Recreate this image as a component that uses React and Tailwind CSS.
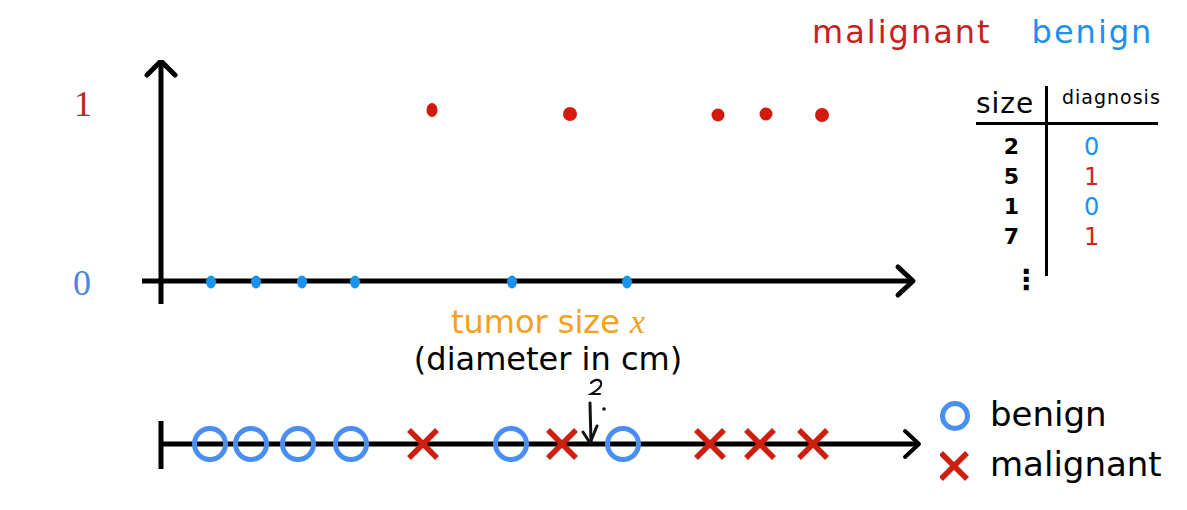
import React from 'react'

const SANS = { fontFamily: '"DejaVu Sans", Verdana, sans-serif' }
const SERIF = { fontFamily: '"Liberation Serif", "DejaVu Serif", serif' }
const HAND = { fontFamily: '"DejaVu Sans", sans-serif' }

const RED_DOTS = [
  { x: 432, y: 110, rx: 5.5, ry: 7 },
  { x: 570, y: 114, rx: 7, ry: 7 },
  { x: 718, y: 115, rx: 6.5, ry: 6.5 },
  { x: 766, y: 114, rx: 6.5, ry: 6.5 },
  { x: 822, y: 115, rx: 7, ry: 7 },
]
const BLUE_DOTS = [211, 256, 302, 355, 512, 627]

const CIRCLES = [210, 251, 298, 351, 511, 623]
const CROSSES = [423, 562, 710, 760, 813]

const ROWS = [
  { size: '2', dx: '0', tone: 'text-[#1e8ff0]' },
  { size: '5', dx: '1', tone: 'text-[#d0261a]' },
  { size: '1', dx: '0', tone: 'text-[#1e8ff0]' },
  { size: '7', dx: '1', tone: 'text-[#d0261a]' },
]

function Cross({ cx, cy, r = 14, w = 5.5 }) {
  return (
    <g stroke="#cc1f10" strokeWidth={w} strokeLinecap="butt">
      <line x1={cx - r} y1={cy - r} x2={cx + r} y2={cy + r} />
      <line x1={cx + r} y1={cy - r} x2={cx - r} y2={cy + r} />
    </g>
  )
}

function TopChart() {
  return (
    <div className="relative w-[940px] h-[325px]">
      <svg width="940" height="325" className="absolute inset-0">
        <g transform="translate(0,-60)">
          {/* y axis */}
          <line x1="161" y1="61" x2="161" y2="304" stroke="#000" strokeWidth="5" />
          <polyline points="147,75 161,61 175,75" fill="none" stroke="#000" strokeWidth="5" strokeLinecap="round" strokeLinejoin="round" />
          {/* x axis */}
          <line x1="142" y1="281" x2="912" y2="281" stroke="#000" strokeWidth="5" />
          <polyline points="898,267 913,281 898,295" fill="none" stroke="#000" strokeWidth="5" strokeLinecap="round" strokeLinejoin="round" />
          {RED_DOTS.map((d, i) => (
            <ellipse key={i} cx={d.x} cy={d.y} rx={d.rx} ry={d.ry} fill="#d41a0c" />
          ))}
          {BLUE_DOTS.map((x) => (
            <ellipse key={x} cx={x} cy="282" rx="5" ry="6.5" fill="#1a93f0" />
          ))}
        </g>
      </svg>
      <span className="absolute left-[74px] top-[26px] text-[36px] leading-none text-[#b42a1e]" style={SERIF}>1</span>
      <span className="absolute left-[73px] top-[205px] text-[36px] leading-none text-[#4a86e0]" style={SERIF}>0</span>
      <div className="absolute left-[378px] top-[245px] w-[340px] flex flex-col items-center leading-none">
        <span className="text-[32px] text-[#f5a11c] whitespace-nowrap" style={SANS}>
          tumor size <i className="text-[34px]" style={SERIF}>x</i>
        </span>
        <span className="mt-[4px] text-[32px] text-black whitespace-nowrap" style={SANS}>(diameter in cm)</span>
      </div>
    </div>
  )
}

function DataTable() {
  return (
    <div className="pl-[36px] pt-[26px]" style={HAND}>
      <div className="grid grid-cols-[72px_110px]">
        <div className="h-[39px] border-b-[3px] border-r-[3px] border-black text-[28px] leading-none pt-[4px] tracking-[1px]">size</div>
        <div className="h-[39px] border-b-[3px] border-black text-[19px] leading-none pl-[14px] pt-[2px] tracking-[1px]">diagnosis</div>
        <div className="h-[7px] border-r-[3px] border-black" />
        <div className="h-[7px]" />
        {ROWS.map((r, i) => (
          <React.Fragment key={i}>
            <div className="h-[30px] border-r-[3px] border-black flex items-center justify-center pl-[2px] text-[22px] font-bold leading-none">{r.size}</div>
            <div className={`h-[30px] flex items-center pl-[36px] text-[24px] leading-none ${r.tone}`}>{r.dx}</div>
          </React.Fragment>
        ))}
        <div className="h-[24px] border-r-[3px] border-black relative">
          <span className="absolute left-[36px] top-[14px] text-[28px] font-bold leading-none">⋮</span>
        </div>
        <div />
      </div>
    </div>
  )
}

function NumberLine() {
  return (
    <svg width="940" height="125" className="overflow-visible">
      <g transform="translate(0,-385)">
        <line x1="161" y1="421" x2="161" y2="469" stroke="#000" strokeWidth="5" />
        <line x1="161" y1="444" x2="918" y2="444" stroke="#000" strokeWidth="5" />
        <polyline points="905,431 919,444 905,457" fill="none" stroke="#000" strokeWidth="4" strokeLinecap="round" strokeLinejoin="round" />
        {CIRCLES.map((x) => (
          <circle key={x} cx={x} cy={444} r={15.5} fill="none" stroke="#4a8ef0" strokeWidth="5" />
        ))}
        {CROSSES.map((x) => (
          <Cross key={x} cx={x} cy={444} />
        ))}
        {/* hand-drawn question mark + arrow */}
        <path d="M591,383 C595,378 602,379 601,385 C600,389 594,392 591,394 L600,394" fill="none" stroke="#111" strokeWidth="2.2" strokeLinecap="round" />
        <circle cx="604" cy="409" r="1.8" fill="#111" />
        <path d="M590,403 L591,443" fill="none" stroke="#111" strokeWidth="3" strokeLinecap="round" />
        <path d="M583,432 L590,443 L597,426" fill="none" stroke="#111" strokeWidth="3" strokeLinecap="round" strokeLinejoin="round" />
      </g>
    </svg>
  )
}

function Legend() {
  return (
    <div className="flex flex-col gap-[12px] pt-[12px]" style={SANS}>
      <div className="flex items-center gap-[16px]">
        <svg width="34" height="34">
          <circle cx="15" cy="17" r="12.5" fill="none" stroke="#4a8ef0" strokeWidth="5" />
        </svg>
        <span className="text-[34px] leading-none pb-[4px]">benign</span>
      </div>
      <div className="flex items-center gap-[16px]">
        <svg width="34" height="34">
          <Cross cx={14} cy={17} r={13} w={5.5} />
        </svg>
        <span className="text-[34px] leading-none pb-[4px]">malignant</span>
      </div>
    </div>
  )
}

export default function App() {
  return (
    <div className="w-[1187px] h-[510px] bg-white overflow-hidden flex flex-col">
      <div className="h-[60px] flex items-start gap-[40px] pl-[812px] pt-[16px] text-[32px] leading-none tracking-[2px]" style={HAND}>
        <span className="text-[#c8201c]">malignant</span>
        <span className="text-[#1e8ff0]">benign</span>
      </div>
      <div className="flex h-[325px]">
        <TopChart />
        <DataTable />
      </div>
      <div className="flex h-[125px]">
        <NumberLine />
        <Legend />
      </div>
    </div>
  )
}
